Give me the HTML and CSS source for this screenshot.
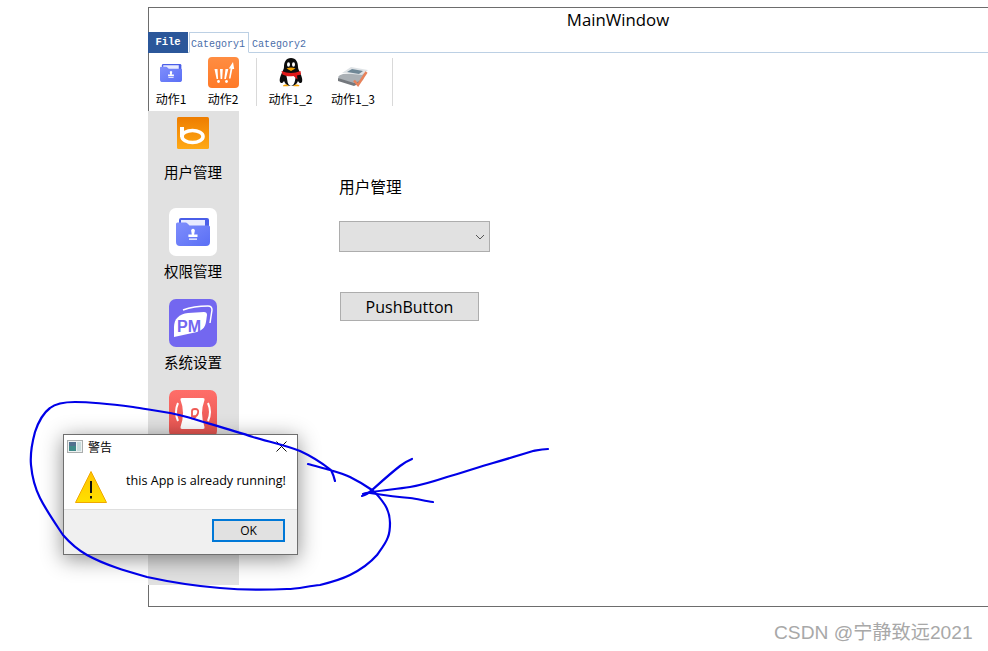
FILE: index.html
```html
<!DOCTYPE html>
<html lang="en">
<head>
    <meta charset="UTF-8">
    <meta name="viewport" content="width=device-width, initial-scale=1.0">
    <title>MainWindow</title>
    <link rel="stylesheet" href="styles.css">
</head>
<body>
    <svg class="defs" width="0" height="0">
        <defs>
            <linearGradient id="folder-front" x1="0" y1="0" x2="1" y2="1">
                <stop offset="0" stop-color="#7f8efc"/>
                <stop offset="1" stop-color="#5a6ff5"/>
            </linearGradient>
            <linearGradient id="bing-bg" x1="0" y1="0" x2="0" y2="1">
                <stop offset="0" stop-color="#ee7d00"/>
                <stop offset="1" stop-color="#ffa916"/>
            </linearGradient>
            <linearGradient id="cart-bg" x1="0" y1="0" x2="0" y2="1">
                <stop offset="0" stop-color="#ff8d42"/>
                <stop offset="1" stop-color="#ff7a28"/>
            </linearGradient>
            <linearGradient id="red-bg" x1="0" y1="0" x2="0" y2="1">
                <stop offset="0" stop-color="#ff6e69"/>
                <stop offset="1" stop-color="#e3524e"/>
            </linearGradient>
            <linearGradient id="warn-bg" x1="0" y1="0" x2="0" y2="1">
                <stop offset="0" stop-color="#ffc400"/>
                <stop offset="1" stop-color="#ffe000"/>
            </linearGradient>
            <symbol id="folder" viewBox="0 0 34 30">
                <path d="M3 3q0-2 2-2h26q2 0 2 2v24H3z" fill="#4a5ee8"/>
                <path d="M5 3h24v6H5z" fill="#e8ebff"/>
                <path d="M0 7q0-1.500 1.500-1.500h8q1 0 2 1l2 2h19q1.500 0 1.500 1.500v15q0 4-4 4H4q-4 0-4-4z" fill="url(#folder-front)"/>
                <path d="M15.300 14.500a1.900 1.900 0 1 1 3.400 0l-.6 3h3.400v2.600h-9.100v-2.600h3.400zM13 21.500h8v1.300h-8z" fill="#fff"/>
            </symbol>
        </defs>
    </svg>

    <div class="window">
        <div class="title">MainWindow</div>

        <div class="tabs">
            <div class="tab-file">File</div>
            <div class="tab tab-active">Category1</div>
            <div class="tab">Category2</div>
        </div>

        <div class="toolbar">
            <div class="tool tool-a">
                <div class="tool-icon">
                    <svg width="22" height="20"><use href="#folder"/></svg>
                </div>
                <span>动作1</span>
            </div>
            <div class="tool tool-b">
                <div class="tool-icon">
                    <svg width="31" height="31" viewBox="0 0 31 31">
                        <rect width="31" height="31" rx="4" fill="url(#cart-bg)"/>
                        <path d="M6.500 12h3l.6 10H8.600zM12 12h2.800l-.6 10h-1.600zM17.500 12h2.800l-2.400 10h-1.600zM21 21.500l1.600-10h-1.800L25 5l1.200 7h-1.800l-1.900 9.500z" fill="#fff"/>
                        <circle cx="10.500" cy="24.500" r="1.400" fill="#fff"/>
                        <circle cx="18.500" cy="24.500" r="1.400" fill="#fff"/>
                    </svg>
                </div>
                <span>动作2</span>
            </div>
            <div class="sep sep-a"></div>
            <div class="tool tool-c">
                <div class="tool-icon">
                    <svg width="26" height="31" viewBox="0 0 26 31">
                        <path d="M13 1c-5 0-7 4-7 9 0 2-1 3-1.500 4.500C3 18 1 22 2 25c1 2 3 1 4-1 1 3 3.500 5 7 5s6-2 7-5c1 2 3 3 4 1 1-3-1-7-2.500-10.500C21 13 20 12 20 10c0-5-2-9-7-9z" fill="#0c0c0c"/>
                        <path d="M8 17c2 8 1 11 5 12 4-1 4-5 5-12z" fill="#fff"/>
                        <ellipse cx="10.500" cy="7.500" rx="1.500" ry="2.300" fill="#fff"/>
                        <ellipse cx="15.500" cy="7.500" rx="1.500" ry="2.300" fill="#fff"/>
                        <path d="M8.500 11.500q4.500-2 9 0l-4.500 2.500z" fill="#f5a300"/>
                        <path d="M3.500 14c6 2.500 13 2.500 19 0l.5 3.500-4 1 .5 4-4-3.500c-3 .5-7 .5-11-1.500z" fill="#e01818"/>
                        <path d="M5 28.500c2-1.500 5-1 5.500.8H5zM15.500 29.300c.5-1.800 4-2.300 6-.8l-.5.8z" fill="#f5a300"/>
                    </svg>
                </div>
                <span>动作1_2</span>
            </div>
            <div class="tool tool-d">
                <div class="tool-icon">
                    <svg class="scanner" width="33" height="24" viewBox="0 0 33 24">
                        <path d="M1 12q1-2 5-3l22-1-2 7-8 4-15-4z" fill="#aab0b5"/>
                        <path d="M5 8l9-6 17 3-6 5z" fill="#dfe3e6"/>
                        <path d="M10 7l5-3 11 2-4 3z" fill="#6f8796"/>
                        <path d="M1 13l16 5 6-2v2l-6 3-16-5z" fill="#74787d"/>
                        <path d="M17 15.500l4 4.500 8.500-13" stroke="#e8825a" stroke-width="2.500" fill="none"/>
                    </svg>
                </div>
                <span>动作1_3</span>
            </div>
            <div class="sep"></div>
        </div>

        <div class="body">
            <div class="sidebar">
                <div class="side-item side-first">
                    <svg class="side-icon" width="32" height="32" viewBox="0 0 32 32">
                        <rect width="32" height="32" rx="1.500" fill="url(#bing-bg)"/>
                        <path d="M5 10v10" stroke="#fff" stroke-width="4" fill="none"/>
                        <ellipse cx="15.500" cy="19.500" rx="10.500" ry="6" stroke="#fff" stroke-width="3.600" fill="none"/>
                    </svg>
                    <div class="side-label">用户管理</div>
                </div>
                <div class="side-item">
                    <div class="tile tile-white">
                        <svg width="34" height="30"><use href="#folder"/></svg>
                    </div>
                    <div class="side-label">权限管理</div>
                </div>
                <div class="side-item">
                    <svg class="side-icon" width="48" height="48" viewBox="0 0 48 48">
                        <rect width="48" height="48" rx="7" fill="#7367f0"/>
                        <path d="M14 11C22 8 32 7 39 7q4 0 4 4l-2 13" stroke="#fff" stroke-width="1.500" fill="none"/>
                        <path d="M5 38V28C5 20 10 15 19 14l16-1q3 0 3 3l-1 7c-1 6-4 8-9 10z" fill="#fff"/>
                        <text class="pm-mark" x="8" y="33">PM</text>
                    </svg>
                    <div class="side-label">系统设置</div>
                </div>
                <div class="side-item">
                    <svg class="side-icon" width="48" height="48" viewBox="0 0 48 48">
                        <rect width="48" height="48" rx="7" fill="url(#red-bg)"/>
                        <path d="M13 8h21q2 0 1.500 2-2.500 7-2.500 13t2.500 14q.5 2-1.500 2H13q-2 0-1.500-2 2.500-7 2.500-14t-2.500-13q-.5-2 1.500-2z" fill="#fff"/>
                        <path d="M9 13q-4 9 0 18M39 13q4 9 0 18" stroke="#fff" stroke-width="2" fill="none"/>
                        <path d="M21 28q4 2 6-2M23 27v-6q0-2 3-2 4 0 3 4t-5 3" stroke="#ef5a55" stroke-width="1.800" fill="none"/>
                    </svg>
                </div>
            </div>

            <div class="main">
                <div class="main-label">用户管理</div>
                <div class="combo">
                    <svg width="10" height="6" viewBox="0 0 10 6"><path d="M1 1l4 4 4-4" stroke="#555" fill="none"/></svg>
                </div>
                <button class="push">PushButton</button>
            </div>
        </div>
    </div>

    <div class="dialog">
        <div class="dialog-title">
            <svg width="16" height="13" viewBox="0 0 16 13">
                <rect x=".5" y=".5" width="15" height="12" fill="#eef1f1" stroke="#a9adad"/>
                <rect x="2" y="2" width="7" height="9" fill="#3e8a88"/>
                <rect x="2" y="2" width="7" height="4" fill="#51718f"/>
                <rect x="10" y="2" width="4" height="9" fill="#c7dcdc"/>
            </svg>
            <span>警告</span>
            <svg class="dialog-close" width="11" height="11" viewBox="0 0 11 11"><path d="M.5.500l10 10M10.500.500l-10 10" stroke="#111" fill="none"/></svg>
        </div>
        <div class="dialog-body">
            <svg width="32" height="32" viewBox="0 0 32 32">
                <path d="M16 .500L31.500 31.500H.5z" fill="url(#warn-bg)" stroke="#f0a800" stroke-linejoin="round"/>
                <path d="M15 10h2v12h-2zM15 25h2v2.500h-2z" fill="#111"/>
            </svg>
            <p>this App is already running!</p>
        </div>
        <div class="dialog-foot">
            <button class="ok">OK</button>
        </div>
    </div>

    <!-- pen marks drawn over the window -->
    <svg class="ink" width="988" height="651" viewBox="0 0 988 651">
        <path d="M335 481C334 476 332 472 331 470C322 463 311 456 300 451C285 445 270 442 253 437C232 430 210 424 187 417C170 412 150 410 133 407C110 404 92 402 75 402C62 402 55 404 50 408C42 414 38 423 35 432C32 443 30 454 31 465C32 476 35 488 40 498C46 510 55 523 63 535C70 543 78 550 87 555C105 565 126 571 147 577C170 582 195 586 220 588C243 590 265 590 287 589C298 589 308 586 320 585C332 582 342 579 350 575C360 570 370 563 377 555C382 548 386 543 388 537C390 532 390 528 390 523C390 516 388 510 385 505C381 499 377 494 372 490C365 485 358 481 350 477C344 474 337 472 330 470C323 468 315 466 308 464"/>
        <path d="M548 449C542 449 538 450 533 451C520 455 507 459 493 463C478 467 462 473 447 477C435 481 422 485 410 487C397 489 385 490 372 492C368 493 366 493 363 494"/>
        <path d="M412 459C407 461 404 463 400 466C391 473 381 482 372 490C369 493 366 495 362 496"/>
        <path d="M370 493C383 495 397 497 410 498C418 499 425 501 433 502"/>
    </svg>

    <div class="watermark">CSDN @宁静致远2021</div>
</body>
</html>
```
FILE: styles.css
```css
html, body {
    margin: 0;
    height: 100%;
    overflow: hidden;
    background: #fff;
}
body {
    position: relative;
    font-family: "Noto Sans CJK SC", sans-serif;
    color: #000;
}
.defs {
    position: absolute;
}
.window {
    position: absolute;
    left: 148px;
    top: 7px;
    width: 938px;
    height: 598px;
    border: 1px solid #6d6d6d;
    border-right: none;
    display: flex;
    flex-direction: column;
}
.title {
    height: 24px;
    line-height: 24px;
    text-align: center;
    font-family: "Open Sans", sans-serif;
    font-size: 16.800px;
}
.tabs {
    display: flex;
    height: 20px;
    border-bottom: 1px solid #bcd0e4;
    font-family: "Liberation Mono", monospace;
    font-size: 10px;
}
.tab-file {
    width: 40px;
    margin-left: -1px;
    height: 21px;
    line-height: 21px;
    text-align: center;
    background: #2b579a;
    color: #fff;
    font-family: "Liberation Mono", monospace;
    font-size: 10.500px;
    font-weight: bold;
}
.tab {
    padding: 3px 3px 0;
    line-height: 19px;
    color: #4a6ea9;
    height: 18px;
}
.tab-active {
    margin-left: 1px;
    border: 1px solid #bcd0e4;
    border-bottom: 1px solid #fff;
    padding: 2px 3px 0 1px;
    box-sizing: border-box;
    height: 21px;
}
.toolbar {
    display: flex;
    height: 58px;
    padding-top: 3px;
    box-sizing: border-box;
}
.tool {
    display: flex;
    flex-direction: column;
    align-items: center;
    font-size: 12px;
    white-space: nowrap;
}
.tool span {
    line-height: 16px;
}
.tool-icon {
    height: 33px;
    display: flex;
    align-items: center;
    justify-content: center;
    margin-bottom: 2px;
}
.scanner {
    margin-top: 8px;
}
.tool-a {
    width: 52px;
    margin-left: -4px;
}
.tool-b {
    width: 52px;
}
.tool-c {
    width: 67px;
}
.tool-d {
    width: 58px;
}
.sep {
    width: 1px;
    height: 48px;
    margin-top: 2px;
    background: #d9d9d9;
    margin-left: 10px;
}
.sep-a {
    margin-left: 7px;
}
.body {
    flex: 1;
    display: flex;
}
.sidebar {
    width: 91px;
    height: 474px;
    margin-left: -1px;
    padding-right: 1px;
    box-sizing: border-box;
    background: #e1e1e1;
    overflow: hidden;
}
.side-item {
    height: 91px;
    display: flex;
    flex-direction: column;
    align-items: center;
}
.side-first {
    height: 97px;
    padding-top: 6px;
    box-sizing: border-box;
}
.side-first .side-label {
    margin-top: 13px;
}
.side-icon {
    display: block;
    flex: none;
}
.tile {
    width: 48px;
    height: 48px;
    flex: none;
    display: flex;
    align-items: center;
    justify-content: center;
    border-radius: 7px;
}
.tile-white {
    background: #fff;
}
.side-label {
    margin-top: 5px;
    font-size: 14.500px;
    line-height: 20px;
}
.pm-mark {
    font-family: "Liberation Sans", sans-serif;
    font-size: 16px;
    font-weight: bold;
    fill: #7367f0;
}
.main {
    padding: 65px 0 0 100px;
    display: flex;
    flex-direction: column;
    align-items: flex-start;
}
.main-label {
    font-size: 15.700px;
    line-height: 22px;
}
.combo {
    margin-top: 23px;
    width: 151px;
    height: 31px;
    box-sizing: border-box;
    background: #e1e1e1;
    border: 1px solid #adadad;
    display: flex;
    align-items: center;
    justify-content: flex-end;
    padding-right: 4px;
}
.push {
    margin: 40px 0 0 1px;
    width: 139px;
    height: 29px;
    padding: 0;
    background: #e1e1e1;
    border: 1px solid #adadad;
    font-family: "Open Sans", sans-serif;
    font-size: 16px;
    color: #000;
}
.dialog {
    position: absolute;
    left: 63px;
    top: 434px;
    width: 235px;
    height: 121px;
    box-sizing: border-box;
    border: 1px solid #6f6f6f;
    background: #fff;
    box-shadow: 0 4px 20px rgba(0, 0, 0, 0.45);
    display: flex;
    flex-direction: column;
}
.dialog-title {
    height: 23px;
    flex: none;
    display: flex;
    align-items: center;
    gap: 5px;
    padding-left: 3px;
    font-size: 12px;
}
.dialog-close {
    margin-left: auto;
    margin-right: 10px;
}
.dialog-body {
    flex: 1;
    display: flex;
    align-items: flex-start;
    padding: 13px 0 0 11px;
    border-bottom: 1px solid #dfdfdf;
}
.dialog-body p {
    margin: 0 0 0 19px;
    padding-top: 2px;
    font-family: "Open Sans", sans-serif;
    font-size: 12.600px;
    line-height: 16px;
    white-space: nowrap;
}
.dialog-foot {
    height: 44px;
    flex: none;
    background: #f0f0f0;
    display: flex;
    justify-content: flex-end;
    padding: 9px 12px 0 0;
    box-sizing: border-box;
}
.ok {
    width: 73px;
    height: 23px;
    padding: 0;
    background: #e1e1e1;
    border: 2px solid #0078d7;
    font-family: "Open Sans", sans-serif;
    font-size: 12px;
    color: #000;
}
.ink {
    position: absolute;
    left: 0;
    top: 0;
    fill: none;
    stroke: #0000e8;
    stroke-width: 2.200;
    stroke-linecap: round;
    stroke-linejoin: round;
}
.watermark {
    position: absolute;
    left: 774px;
    top: 620px;
    font-family: "Liberation Sans", "Noto Sans CJK SC", sans-serif;
    font-size: 19.200px;
    line-height: 26px;
    color: #a8a8a8;
    white-space: nowrap;
}
```
